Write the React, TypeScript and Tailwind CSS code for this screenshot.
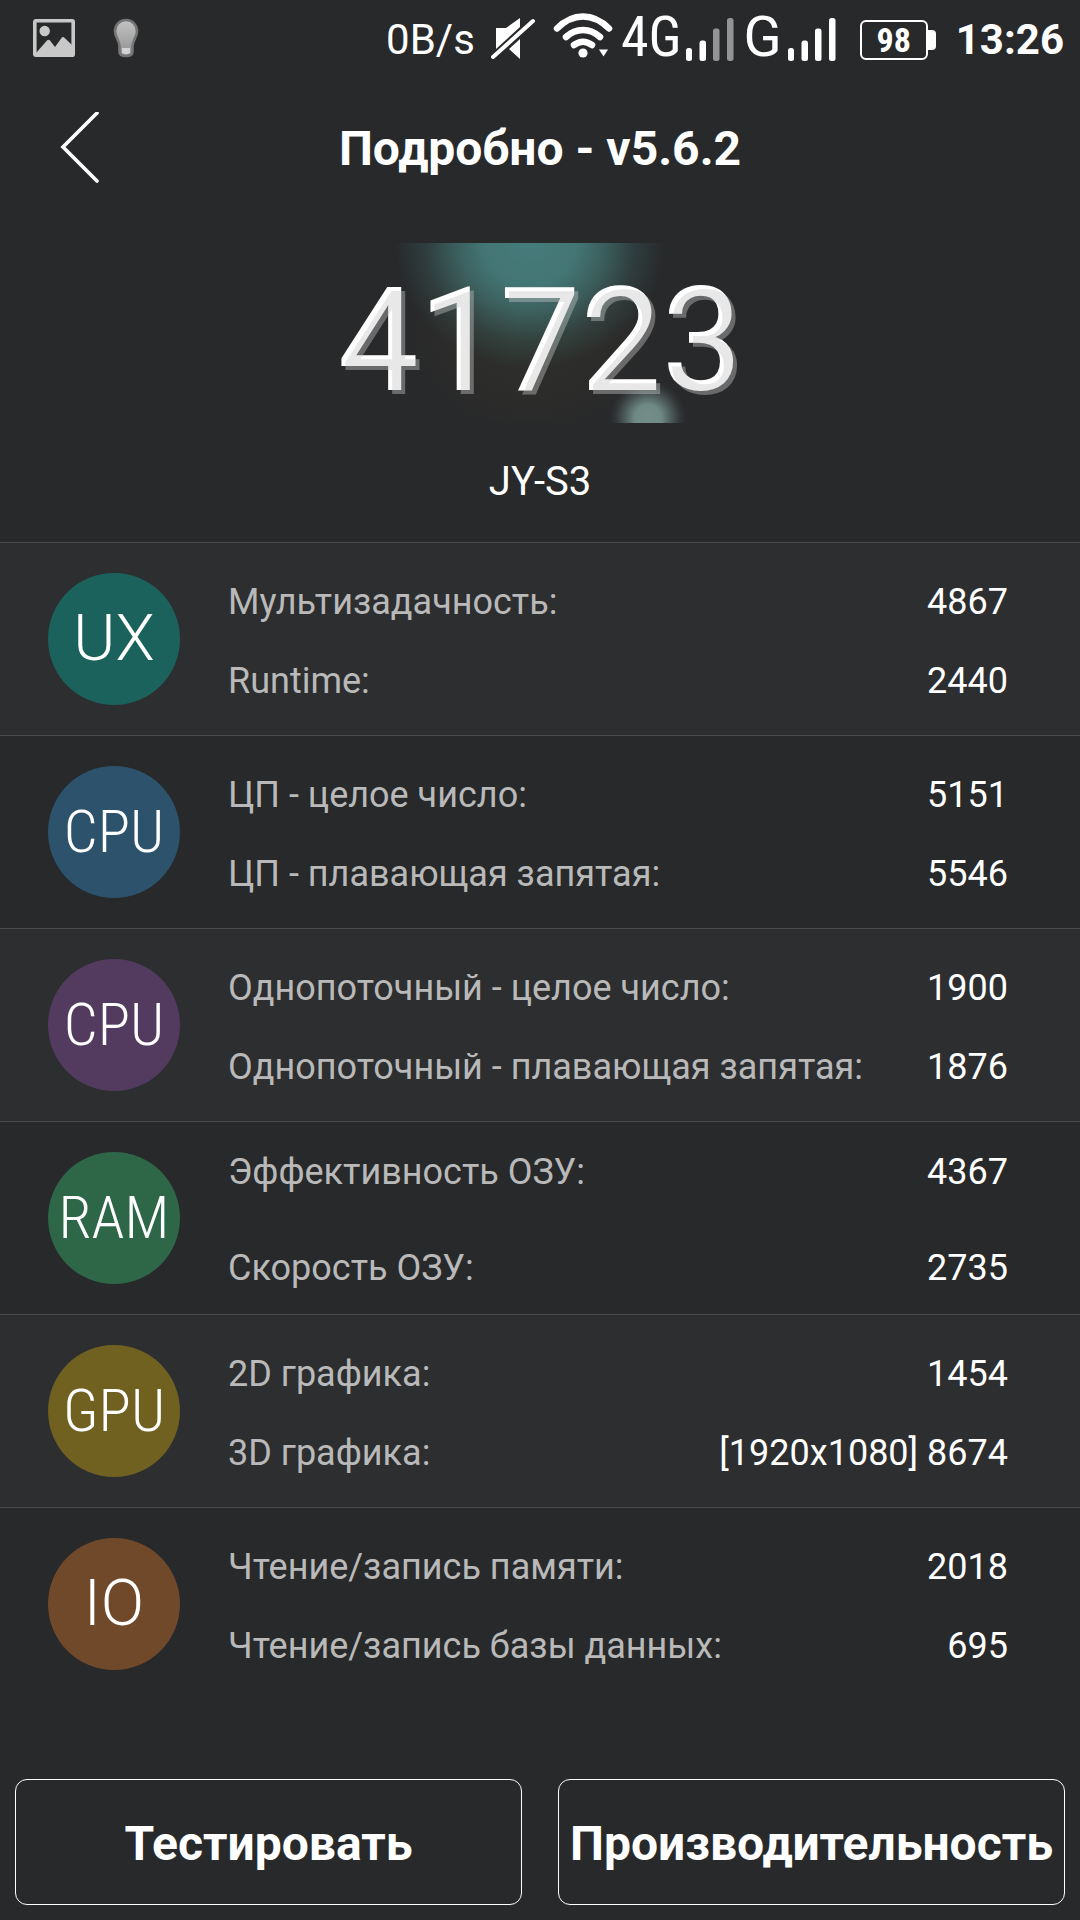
import React from 'react';

interface Score {
  label: string;
  value: string;
}

interface Group {
  id: string;
  badge: string;
  badgeClass: string;
  scores: Score[];
  spread?: boolean;
}

const wideBadge = 'font-[Roboto,sans-serif] text-[64px]';
const narrowBadge = "font-['Roboto_Condensed',Roboto,sans-serif] text-[60px]";

const groups: Group[] = [
  {
    id: 'ux',
    badge: 'UX',
    badgeClass: `bg-[#1b625d] ${wideBadge}`,
    scores: [
      { label: 'Мультизадачность:', value: '4867' },
      { label: 'Runtime:', value: '2440' },
    ],
  },
  {
    id: 'cpu-multi',
    badge: 'CPU',
    badgeClass: `bg-[#2c526c] ${narrowBadge}`,
    scores: [
      { label: 'ЦП - целое число:', value: '5151' },
      { label: 'ЦП - плавающая запятая:', value: '5546' },
    ],
  },
  {
    id: 'cpu-single',
    badge: 'CPU',
    badgeClass: `bg-[#533b60] ${narrowBadge}`,
    scores: [
      { label: 'Однопоточный - целое число:', value: '1900' },
      { label: 'Однопоточный - плавающая запятая:', value: '1876' },
    ],
  },
  {
    id: 'ram',
    badge: 'RAM',
    badgeClass: `bg-[#2d6747] ${narrowBadge}`,
    spread: true,
    scores: [
      { label: 'Эффективность ОЗУ:', value: '4367' },
      { label: 'Скорость ОЗУ:', value: '2735' },
    ],
  },
  {
    id: 'gpu',
    badge: 'GPU',
    badgeClass: `bg-[#706120] ${narrowBadge}`,
    scores: [
      { label: '2D графика:', value: '1454' },
      { label: '3D графика:', value: '[1920x1080] 8674' },
    ],
  },
  {
    id: 'io',
    badge: 'IO',
    badgeClass: `bg-[#70492b] ${wideBadge}`,
    scores: [
      { label: 'Чтение/запись памяти:', value: '2018' },
      { label: 'Чтение/запись базы данных:', value: '695' },
    ],
  },
];

const SignalBars: React.FC<{ level: number }> = ({ level }) => (
  <svg className="w-12 h-11 shrink-0" viewBox="0 0 48 44" aria-hidden="true">
    <rect x="0" y="30" width="6" height="13" rx="2.5" fill="#fff" />
    <rect x="13.5" y="22.5" width="6.5" height="20.5" rx="2.5" fill="#fff" />
    <rect x="27" y="10.5" width="6.5" height="32.5" rx="2.5" fill={level > 2 ? '#fff' : '#949496'} />
    <rect x="41" y="0" width="6.5" height="43" rx="2.5" fill={level > 3 ? '#fff' : '#949496'} />
  </svg>
);

const StatusBar: React.FC = () => (
  <div className="flex items-center h-[76px] pl-[33px] pr-4">
    {/* Notifications */}
    <svg className="w-[42px] h-[38px]" viewBox="0 0 42 38" aria-hidden="true">
      <rect x="1.8" y="1.8" width="38.4" height="34.4" rx="1" fill="none" stroke="#c8c8c8" strokeWidth="3.6" />
      <circle cx="11.7" cy="12" r="5.2" fill="#c8c8c8" />
      <path d="M3 34L14 21.5q1.5-1.5 3 0L22 28l6.500-9q1.500-2 3.200 0L39 26v10H3z" fill="#c8c8c8" />
    </svg>
    <svg className="w-[26px] h-10 ml-[38px]" viewBox="0 0 26 40" aria-hidden="true">
      <defs>
        <linearGradient id="bulb" x1="0" y1="0" x2="0" y2="1">
          <stop offset="0" stopColor="#c4c4c4" />
          <stop offset="1" stopColor="#8f8f8f" />
        </linearGradient>
      </defs>
      <path d="M13 2C6.500 2 2 7 2 13.200c0 5.500 4 8.500 4.500 14.800v6q0 4 6.500 4t6.500-4v-6c.5-6.300 4.500-9.300 4.500-14.800C24 7 19.500 2 13 2z" fill="url(#bulb)" stroke="#757576" strokeWidth="2.600" />
      <path d="M9 30h8v5q-4 2.500-8 0z" fill="#d2d2d2" />
    </svg>

    {/* System */}
    <div className="flex items-center ml-auto pt-1">
      <span className="text-[42px] leading-[56px]">0B/s</span>
      <svg className="w-11 h-11 ml-4" viewBox="0 0 44 44" aria-hidden="true">
        <path d="M5 10h10L29 0v9L5 31zM29 21v20L18 31z" fill="#fff" />
        <path d="M2 39L42 3" stroke="#fff" strokeWidth="4" strokeLinecap="round" />
      </svg>
      <svg className="self-start w-[60px] h-12 ml-[18px]" viewBox="0 0 60 48" fill="none" stroke="#fff" strokeWidth="6.500" aria-hidden="true">
        <path d="M4 16.500Q16 4.500 30 4.500t26 12" strokeLinecap="round" />
        <path d="M13 25Q20.500 18 30 18T47 25" strokeLinecap="round" />
        <path d="M21 33Q30 26.500 39 33" strokeLinecap="round" />
        <circle cx="30" cy="41" r="4.600" fill="#fff" stroke="none" />
        <path d="M46 37.500h9l-4.500 7z" fill="#fff" stroke="none" />
      </svg>
      <span className="self-start ml-2 font-['Roboto_Condensed',Roboto,sans-serif] text-[56px] leading-[50px]">4G</span>
      <div className="ml-1">
        <SignalBars level={2} />
      </div>
      <span className="self-start ml-2.5 text-[56px] leading-[50px]">G</span>
      <div className="ml-1.5">
        <SignalBars level={4} />
      </div>
      <div className="flex items-center ml-6">
        <span className="flex items-center justify-center w-[68px] h-10 border-2 border-white rounded-md font-['Roboto_Condensed',Roboto,sans-serif] text-[34px] leading-9 font-bold">98</span>
        <span className="w-2 h-5 rounded-r-sm bg-white"></span>
      </div>
      <span className="ml-5 text-[42px] leading-[56px] font-bold">13:26</span>
    </div>
  </div>
);

const ScoreGroup: React.FC<{ group: Group }> = ({ group }) => (
  <li className="flex items-center h-[193px] pl-12 pr-[72px] border-t border-[#4a4b4d] odd:bg-[#2d2e30]">
    <span
      className={`flex items-center justify-center shrink-0 size-[132px] rounded-full font-light ${group.badgeClass}`}
    >
      {group.badge}
    </span>
    <dl className="flex-1 ml-12 pt-1">
      {group.scores.map((score) => (
        <div
          key={score.label}
          className={`flex items-center justify-between text-4xl whitespace-nowrap ${group.spread ? 'h-24' : 'h-[79px]'}`}
        >
          <dt className="text-[#b9b9b9]">{score.label}</dt>
          <dd>{score.value}</dd>
        </div>
      ))}
    </dl>
  </li>
);

export default function App() {
  return (
    <div className="flex flex-col min-h-screen bg-[#28292b] text-white font-[Roboto,sans-serif]">
      <StatusBar />

      <header className="grid grid-cols-[160px_1fr_160px] items-center h-[143px]">
        <button type="button" aria-label="Назад" className="flex items-center h-full pl-[60px]">
          <svg className="w-10 h-[72px]" viewBox="0 0 40 72" fill="none" stroke="#fff" strokeWidth="3.600" aria-hidden="true">
            <path d="M37 1L3 35l34 34" strokeLinecap="round" />
          </svg>
        </button>
        <h1 className="pt-0.5 text-center text-5xl font-bold">Подробно - v5.6.2</h1>
      </header>

      <section className="flex flex-col items-center pt-6 pb-8">
        {/* Total score over a blurred glow */}
        <div className="flex items-center justify-center w-[480px] h-[180px] pt-6 bg-[radial-gradient(circle_38px_at_348px_175px,#748d89_0%,#6f8985_35%,#6f898580_62%,#6f898520_85%,transparent_100%),radial-gradient(ellipse_135px_125px_at_230px_0px,#457c7b_0%,#437574_35%,#437574b0_55%,#43757440_78%,transparent_100%),radial-gradient(ellipse_130px_120px_at_230px_80px,#2e322b_0%,#2e2d2ab0_60%,transparent_100%)]">
          <p className="pl-2 text-[144px] leading-[144px] text-[#c8c8c8]/41 [text-shadow:-4px_-4px_0_#fff]">41723</p>
        </div>
        <p className="mt-[31px] text-[40px] leading-[56px]">JY-S3</p>
      </section>

      <ul>
        {groups.map((group) => (
          <ScoreGroup key={group.id} group={group} />
        ))}
      </ul>

      <footer className="grid grid-cols-2 gap-9 mt-auto px-[15px] pb-[15px]">
        <button type="button" className="h-[126px] pt-1 border border-white rounded-xl text-5xl font-bold">
          Тестировать
        </button>
        <button type="button" className="h-[126px] pt-1 border border-white rounded-xl text-5xl font-bold">
          Производительность
        </button>
      </footer>
    </div>
  );
}
